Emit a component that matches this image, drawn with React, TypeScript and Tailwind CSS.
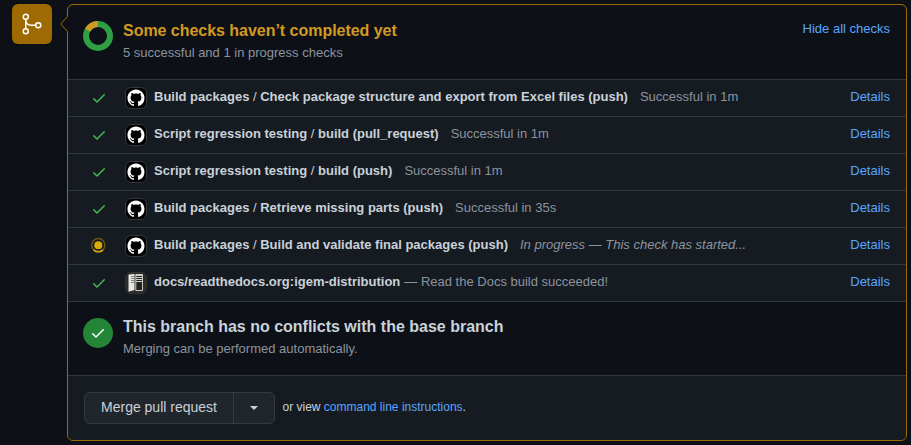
import React from "react";

const CHECK =
  "M13.78 4.22a.75.75 0 010 1.06l-7.25 7.25a.75.75 0 01-1.06 0L2.22 9.28a.75.75 0 011.06-1.06L6 10.94l6.72-6.72a.75.75 0 011.06 0z";
const MARK =
  "M8 0C3.58 0 0 3.58 0 8c0 3.54 2.29 6.53 5.47 7.59.4.07.55-.17.55-.38 0-.19-.01-.82-.01-1.49-2.01.37-2.53-.49-2.69-.94-.09-.23-.48-.94-.82-1.13-.28-.15-.68-.52-.01-.53.63-.01 1.08.58 1.23.82.72 1.21 1.87.87 2.33.66.07-.52.28-.87.51-1.07-1.78-.2-3.64-.89-3.64-3.95 0-.87.31-1.59.82-2.15-.08-.2-.36-1.02.08-2.12 0 0 .67-.21 2.2.82.64-.18 1.32-.27 2-.27s1.36.09 2 .27c1.53-1.04 2.2-.82 2.2-.82.44 1.1.16 1.92.08 2.12.51.56.82 1.27.82 2.15 0 3.07-1.87 3.75-3.65 3.95.29.25.54.73.54 1.48 0 1.07-.01 1.93-.01 2.2 0 .21.15.46.55.38A8.01 8.01 0 0016 8c0-4.42-3.58-8-8-8z";

function Check({ className }: { className: string }) {
  return (
    <svg viewBox="0 0 16 16" width="16" height="16" className={className}>
      <path d={CHECK} fill="currentColor" />
    </svg>
  );
}

function GithubAvatar() {
  return (
    <svg viewBox="0 0 22 22" width="22" height="22">
      <rect x="0.5" y="0.5" width="21" height="21" rx="5.5" fill="#000" stroke="#33373c" />
      <path d={MARK} fill="#fff" transform="translate(2.5 2.5) scale(1.06)" />
    </svg>
  );
}

function DocsAvatar() {
  return (
    <svg viewBox="0 0 22 22" width="22" height="22">
      <rect x="0.5" y="0.5" width="21" height="21" rx="5.5" fill="#2b2b28" stroke="#33342f" />
      <path d="M3.500 2.500L9.500 2v16l-6 1.800z" fill="#e8e8e2" />
      <path d="M6 4.500h3.500M6 6.500h3.500M6 8.500h3.500M6 10.500h3.500" stroke="#6b6b65" strokeWidth="0.8" />
      <path d="M10.800 2.500h6.700v16h-6.700z" fill="#22221f" stroke="#dcdcd6" strokeWidth="0.900" />
      <path d="M11 3.500h6M11 5.500h6M11 7.500h6M11 9.500h6" stroke="#d5d5cf" strokeWidth="1.200" />
    </svg>
  );
}

function Pending() {
  return (
    <svg viewBox="0 0 16 16" width="16" height="16">
      <circle cx="8.300" cy="8.200" r="6.600" fill="none" stroke="#6d5310" strokeWidth="1.5" />
      <path d="M3.600 12.900A6.600 6.600 0 0 0 13 12.900" fill="none" stroke="#d5a20b" strokeWidth="1.5" />
      <circle cx="8.300" cy="8.200" r="4" fill="#dbab0a" />
    </svg>
  );
}

type Row = { name: string[]; note: string; kind: "ok" | "pending" | "docs" };
const rows: Row[] = [
  { name: ["Build packages", "Check package structure and export from Excel files (push)"], note: "Successful in 1m", kind: "ok" },
  { name: ["Script regression testing", "build (pull_request)"], note: "Successful in 1m", kind: "ok" },
  { name: ["Script regression testing", "build (push)"], note: "Successful in 1m", kind: "ok" },
  { name: ["Build packages", "Retrieve missing parts (push)"], note: "Successful in 35s", kind: "ok" },
  { name: ["Build packages", "Build and validate final packages (push)"], note: "In progress — This check has started...", kind: "pending" },
  { name: ["docs/readthedocs.org:igem-distribution"], note: "— Read the Docs build succeeded!", kind: "docs" },
];

function CheckRow({ row }: { row: Row }) {
  return (
    <li className="flex h-[37px] items-start border-t border-[#30363d] bg-[#161b22] pr-4 pl-[22px] leading-5">
      <span className={row.kind === "pending" ? "mt-[9px] flex w-[35px] shrink-0" : "mt-[10px] flex w-[35px] shrink-0 pl-px"}>
        {row.kind === "pending" ? <Pending /> : <Check className="text-[#3fb950]" />}
      </span>
      <span className="mt-[7px] mr-[7px] shrink-0">{row.kind === "docs" ? <DocsAvatar /> : <GithubAvatar />}</span>
      <span className="mt-[7px] flex-1 whitespace-nowrap text-[#8b949e]">
        <strong className="font-semibold text-[#c9d1d9]">
          {row.name[0]}
          {row.name[1] && (
            <>
              <span className="font-normal"> / </span>
              {row.name[1]}
            </>
          )}
        </strong>
        <span className={row.kind === "pending" ? "ml-3 italic" : row.kind === "docs" ? "ml-1" : "ml-3"}>{row.note}</span>
      </span>
      <a className="mt-[7px] text-[#58a6ff]">Details</a>
    </li>
  );
}

export default function App() {
  return (
    <div className="flex h-[445px] w-[911px] overflow-hidden bg-[#0d1117] pt-1 pl-3 font-['Liberation_Sans',Arial,sans-serif] text-[13px] text-[#c9d1d9]">
      <div className="mr-[15px] flex size-10 shrink-0 items-center justify-center rounded-md bg-[#9e6a03] text-white">
        <svg viewBox="0 0 24 24" width="24" height="24" fill="none" stroke="currentColor" strokeWidth="1.5">
          <circle cx="5.750" cy="4.750" r="2.500" />
          <circle cx="5.750" cy="19.250" r="2.500" />
          <circle cx="18.250" cy="13.250" r="2.500" />
          <path d="M5.750 7.250v9.500M5.750 7.250c0 3.500 2 6 5.500 6h4.500" />
        </svg>
      </div>
      <section className="relative h-[437px] w-[840px] rounded-md border border-[#9e6a03]">
        <svg viewBox="0 0 8 16" width="8" height="16" className="absolute top-[11px] left-[-8px]">
          <path d="M8 0L0.700 8L8 16z" fill="#0d1117" />
          <path d="M7.500 0.500L0.700 8l6.800 7.500" fill="none" stroke="#9e6a03" />
        </svg>
        <div className="flex h-[74px] pt-4 pr-4 pl-[15px]">
          <svg viewBox="0 0 30 30" width="30" height="30" className="mr-[10px]">
            <circle cx="15" cy="15" r="12" fill="none" stroke="#2ea043" strokeWidth="6" />
            <path d="M4.608 9A12 12 0 0 1 15 3" fill="none" stroke="#d29922" strokeWidth="6" />
          </svg>
          <div className="flex-1">
            <h3 className="-mt-[2px] text-base leading-6 font-semibold tracking-[-0.03px] text-[#d29922]">Some checks haven’t completed yet</h3>
            <p className="leading-5 text-[#8b949e]">5 successful and 1 in progress checks</p>
          </div>
          <a className="-mt-[2px] leading-5 text-[#58a6ff]">Hide all checks</a>
        </div>
        <ul>
          {rows.map((row) => (
            <CheckRow key={row.name.join()} row={row} />
          ))}
        </ul>
        <div className="flex h-[74px] border-t border-[#30363d] pt-4 pl-[15px]">
          <span className="mr-[10px] flex size-[30px] items-center justify-center rounded-full bg-[#238636]">
            <Check className="text-white" />
          </span>
          <div>
            <h3 className="-mt-[3px] text-base leading-6 font-semibold">This branch has no conflicts with the base branch</h3>
            <p className="leading-5 text-[#8b949e]">Merging can be performed automatically.</p>
          </div>
        </div>
        <div className="flex h-[65px] items-start rounded-b-md border-t border-[#30363d] bg-[#161b22] pt-4 pl-4">
          <div className="flex h-8 w-[191px] rounded-md border border-[#363b42] bg-[#21262d] text-sm leading-[28px]">
            <button className="w-[149px] border-r border-[#363b42] pb-0.5">Merge pull request</button>
            <button className="flex flex-1 items-center justify-center">
              <span className="border-x-4 border-t-4 border-x-transparent border-t-[#c9d1d9]" />
            </button>
          </div>
          <p className="mt-[5px] ml-[7.5px] text-xs leading-5">
            or view <a className="text-[#58a6ff]">command line instructions</a>.
          </p>
        </div>
      </section>
    </div>
  );
}
